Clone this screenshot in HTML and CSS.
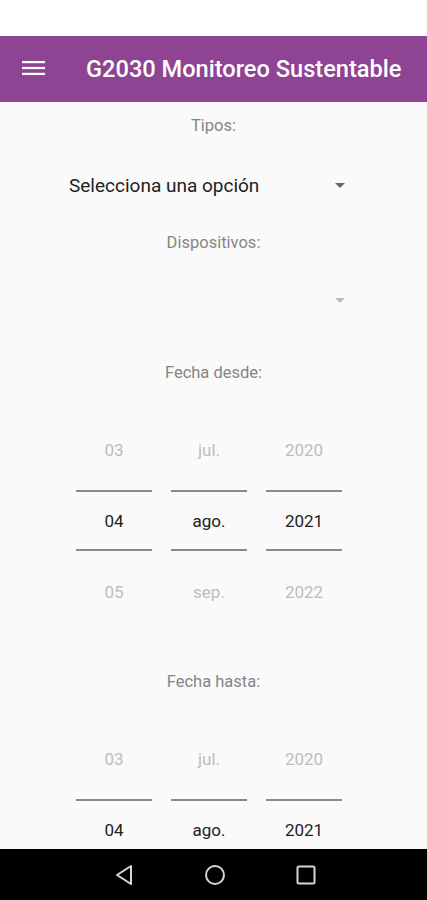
FILE: index.html
```html
<!DOCTYPE html>
<html lang="es">
<head>
  <meta charset="UTF-8">
  <meta name="viewport" content="width=device-width, initial-scale=1.0">
  <title>G2030 Monitoreo Sustentable</title>
  <link rel="stylesheet" href="styles.css">
</head>
<body>
  <div class="status-bar"></div>

  <header class="app-bar">
    <button class="menu-btn" aria-label="Menú">
      <svg width="23" height="14" viewBox="0 0 23 14">
        <rect x="0" y="0" width="23" height="2.2" fill="#fff"/>
        <rect x="0" y="5.9" width="23" height="2.2" fill="#fff"/>
        <rect x="0" y="11.8" width="23" height="2.2" fill="#fff"/>
      </svg>
    </button>
    <h1>G2030 Monitoreo Sustentable</h1>
  </header>

  <main class="content">
    <p class="field-label label-tipos">Tipos:</p>
    <div class="select">
      <span class="select-value">Selecciona una opción</span>
      <span class="select-arrow"></span>
    </div>

    <p class="field-label">Dispositivos:</p>
    <div class="select disabled">
      <span class="select-value"></span>
      <span class="select-arrow"></span>
    </div>

    <p class="field-label label-fecha">Fecha desde:</p>
    <div class="date-picker">
      <div class="wheel">
        <div class="wheel-item">03</div>
        <div class="wheel-item selected"><span>04</span></div>
        <div class="wheel-item">05</div>
      </div>
      <div class="wheel">
        <div class="wheel-item">jul.</div>
        <div class="wheel-item selected"><span>ago.</span></div>
        <div class="wheel-item">sep.</div>
      </div>
      <div class="wheel">
        <div class="wheel-item">2020</div>
        <div class="wheel-item selected"><span>2021</span></div>
        <div class="wheel-item">2022</div>
      </div>
    </div>

    <p class="field-label label-hasta">Fecha hasta:</p>
    <div class="date-picker">
      <div class="wheel">
        <div class="wheel-item">03</div>
        <div class="wheel-item selected"><span>04</span></div>
      </div>
      <div class="wheel">
        <div class="wheel-item">jul.</div>
        <div class="wheel-item selected"><span>ago.</span></div>
      </div>
      <div class="wheel">
        <div class="wheel-item">2020</div>
        <div class="wheel-item selected"><span>2021</span></div>
      </div>
    </div>
  </main>

  <nav class="nav-bar">
    <svg width="20" height="22" viewBox="0 0 20 22">
      <path d="M17 2 L3 11 L17 20 Z" fill="none" stroke="#d6d6d6" stroke-width="2" stroke-linejoin="round"/>
    </svg>
    <svg width="22" height="22" viewBox="0 0 22 22">
      <circle cx="11" cy="11" r="9" fill="none" stroke="#d6d6d6" stroke-width="2"/>
    </svg>
    <svg width="20" height="20" viewBox="0 0 20 20">
      <rect x="1.5" y="1.5" width="17" height="17" rx="1.5" fill="none" stroke="#d6d6d6" stroke-width="2"/>
    </svg>
  </nav>
</body>
</html>
```

FILE: styles.css
```css
body {
  margin: 0;
  padding: 0;
  height: 900px;
  display: flex;
  flex-direction: column;
  font-family: Roboto, "Noto Sans", Arial, sans-serif;
  background: #fafafa;
  overflow: hidden;
}

.status-bar {
  height: 36px;
  background: #fff;
  flex-shrink: 0;
}

.app-bar {
  height: 66px;
  flex-shrink: 0;
  display: flex;
  align-items: center;
  background: #8e4492;
  color: #fff;
}

.menu-btn {
  display: flex;
  align-items: center;
  background: none;
  border: none;
  padding: 0;
  margin: 0 0 2px 22px;
  cursor: pointer;
}

.app-bar h1 {
  margin: 0 0 0 41px;
  font-size: 23.6px;
  font-weight: 500;
  white-space: nowrap;
}

.content {
  flex: 1;
  overflow: hidden;
  display: flex;
  flex-direction: column;
}

.content > * {
  flex-shrink: 0;
}

.field-label {
  margin: 0;
  height: 20px;
  line-height: 20px;
  text-align: center;
  font-size: 16.5px;
  color: #858585;
}

.label-tipos {
  margin-top: 14px;
}

.select {
  height: 48px;
  margin: 25px 0 24px;
  padding: 0 82px 0 69px;
  display: flex;
  align-items: center;
  justify-content: space-between;
}

.select.disabled {
  margin: 23px 0 0;
}

.select-value {
  font-size: 19px;
  color: #222;
}

.select-arrow {
  width: 0;
  height: 0;
  border-left: 5px solid transparent;
  border-right: 5px solid transparent;
  border-top: 5px solid #666;
}

.select.disabled .select-arrow {
  border-top-color: #bcbcbc;
}

.label-fecha {
  margin-top: 39px;
}

.label-hasta {
  margin-top: 45px;
}

.date-picker {
  margin-top: 31px;
  padding-right: 9px;
  display: flex;
  justify-content: center;
  gap: 19px;
}

.wheel {
  width: 76px;
  display: flex;
  flex-direction: column;
}

.wheel-item {
  height: 71px;
  display: flex;
  align-items: center;
  justify-content: center;
  font-size: 17px;
  color: #bdbdbd;
}

.wheel-item.selected span {
  box-sizing: border-box;
  width: 100%;
  height: 61px;
  display: flex;
  align-items: center;
  justify-content: center;
  border-top: 2px solid #8a8a8a;
  border-bottom: 2px solid #8a8a8a;
  color: #222;
}

.nav-bar {
  height: 51px;
  flex-shrink: 0;
  background: #000;
  display: flex;
  align-items: center;
  justify-content: center;
  gap: 70px;
  padding-left: 2px;
}
```
